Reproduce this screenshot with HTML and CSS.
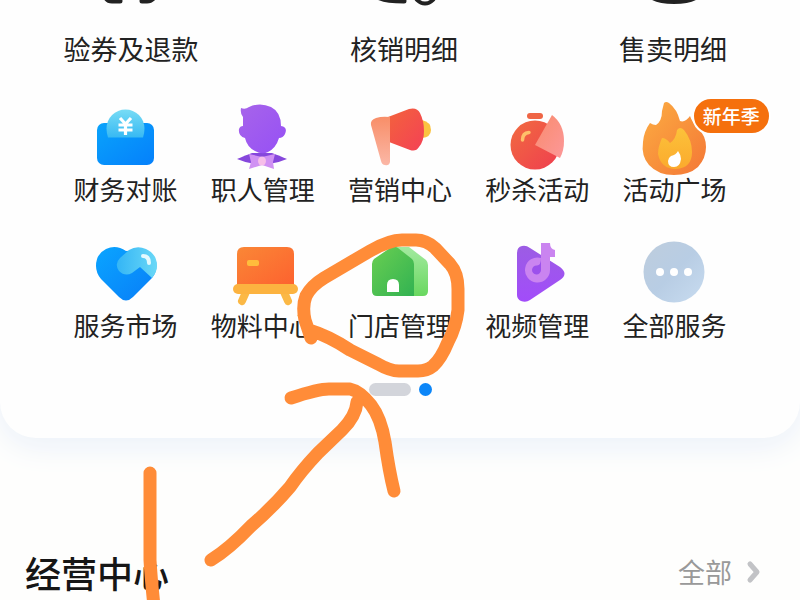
FILE: index.html
```html
<!DOCTYPE html>
<html lang="zh-CN">
<head>
<meta charset="utf-8">
<meta name="viewport" content="width=device-width, initial-scale=1">
<title>经营中心</title>
<link rel="stylesheet" href="styles.css">
</head>
<body>
<main class="page">
  <section class="card">
    <nav class="primary">
      <a class="primary-item" href="#">
        <svg class="primary-icon" viewBox="91 0 80 35" aria-hidden="true"><g fill="none" stroke="#222" stroke-width="5" stroke-linecap="round"><path d="M105-4Q107 1 112 1H120"/><path d="M142 1H147Q152 1 156-5"/></g></svg>
        <span>验券及退款</span>
      </a>
      <a class="primary-item" href="#">
        <svg class="primary-icon" viewBox="364 0 80 35" aria-hidden="true"><g fill="none" stroke="#222" stroke-linecap="round"><path d="M380-2Q387 1 404 1" stroke-width="5"/><circle cx="425" cy="-7" r="10.500" stroke-width="4"/></g></svg>
        <span>核销明细</span>
      </a>
      <a class="primary-item" href="#">
        <svg class="primary-icon" viewBox="633 0 80 35" aria-hidden="true"><path d="M648-3Q655 4 674 4T700-3Z" fill="#222"/></svg>
        <span>售卖明细</span>
      </a>
    </nav>

    <nav class="services">
      <a class="service" href="#">
        <svg class="service-icon" viewBox="86 102 80 72" aria-hidden="true">
          <defs>
            <linearGradient id="wallet" x1="0" y1="0" x2="1" y2="1"><stop offset="0" stop-color="#09a3fb"/><stop offset="1" stop-color="#0580fb"/></linearGradient>
            <linearGradient id="coin" x1="0" y1="0" x2="0" y2="1"><stop offset="0" stop-color="#78dcf5"/><stop offset="1" stop-color="#37b9f3"/></linearGradient>
          </defs>
          <rect x="97" y="123" width="57" height="42" rx="7" fill="url(#wallet)"/>
          <path d="M108 137.500Q106.500 133 106.500 128.500A19 19 0 0 1 144.500 128.500Q144.500 133 143 137.500Z" fill="url(#coin)"/>
          <path d="M120 118L125.500 124L131 118M118.500 125H132.500M118.500 130H132.500M125.500 124V135" fill="none" stroke="#fff" stroke-width="3.200"/>
        </svg>
        <span>财务对账</span>
      </a>
      <a class="service" href="#">
        <svg class="service-icon" viewBox="223 102 80 72" aria-hidden="true">
          <defs><linearGradient id="person" x1="0" y1="0" x2="1" y2="1"><stop offset="0" stop-color="#a764ea"/><stop offset="1" stop-color="#9650f5"/></linearGradient></defs>
          <path d="M237 159Q246 155 252 153H272Q278 155 287 159Q278 163 269 164H255Q246 163 237 159Z" fill="#8647dc"/>
          <path d="M241 108Q245 110 249 107Q260 102 271 107Q281 112 281 126Q288 127 285 134Q283 138 279 138Q276 148 268 152Q262 155 255 151Q247 147 245 138Q238 136 239 129Q240 126 243 126V117Q240 114 241 108Z" fill="url(#person)"/>
          <path d="M249 154L262 157L275 154L273 162L274 169L262 165L249 169L251 162Z" fill="#d091f3"/><ellipse cx="262" cy="161" rx="4" ry="4.500" fill="#f6bee9"/>
        </svg>
        <span>职人管理</span>
      </a>
      <a class="service" href="#">
        <svg class="service-icon" viewBox="360 102 80 72" aria-hidden="true">
          <defs>
            <linearGradient id="horn" x1="0" y1="0" x2="1" y2="1"><stop offset="0" stop-color="#f3633c"/><stop offset="1" stop-color="#f44155"/></linearGradient>
            <linearGradient id="handle" x1="0" y1="0" x2="0" y2="1"><stop offset="0" stop-color="#f88e68"/><stop offset="1" stop-color="#fbb7a6"/></linearGradient>
          </defs>
          <path d="M422 120Q431 122 431 130Q431 137 422 138Z" fill="#fbc340"/>
          <path d="M388 117L409 109Q417 107 420 113Q424 121 424 131Q424 141 419 147Q416 152 410 150L389 142Z" fill="url(#horn)"/>
          <path d="M376 118Q382 116 390 117V162Q389 166 385 165Q382 165 381 161L371 125Q370 120 376 118Z" fill="url(#handle)"/>
        </svg>
        <span>营销中心</span>
      </a>
      <a class="service" href="#">
        <svg class="service-icon" viewBox="497 102 80 72" aria-hidden="true">
          <defs>
            <linearGradient id="watch" x1="0" y1="0" x2="1" y2="1"><stop offset="0" stop-color="#f16b40"/><stop offset="1" stop-color="#ef3e4f"/></linearGradient>
            <linearGradient id="slice" x1="0" y1="0" x2="1" y2="1"><stop offset="0" stop-color="#f98b6c"/><stop offset="1" stop-color="#fc9899"/></linearGradient>
          </defs>
          <rect x="527" y="113" width="16" height="6" rx="3" fill="#ef6545"/>
          <circle cx="535" cy="145" r="24.500" fill="url(#watch)"/>
          <path d="M535 145L552 115Q564 124 564 141Q564 151 560 158Z" fill="url(#slice)"/>
          <path d="M522.500 140Q522.500 133 529 132.500" fill="none" stroke="#ffc06a" stroke-width="3.500" stroke-linecap="round"/>
        </svg>
        <span>秒杀活动</span>
      </a>
      <a class="service" href="#">
        <svg class="service-icon" viewBox="634 102 80 72" aria-hidden="true">
          <defs>
            <linearGradient id="flame" x1="0" y1="0" x2="1" y2="1"><stop offset="0" stop-color="#fcad42"/><stop offset="1" stop-color="#f47736"/></linearGradient>
            <linearGradient id="core" x1="0" y1="0" x2="0" y2="1"><stop offset="0" stop-color="#fcc23a"/><stop offset="1" stop-color="#fbaa2d"/></linearGradient>
          </defs>
          <path d="M664 103Q666 101 669 103Q677 109 680 121Q685 123 690 116Q692 122 698 128Q706 136 706 147Q706 158 698 167Q689 175 674 175Q658 175 649 165Q641 156 643 142Q644 131 650 123Q653 125 656 125Q662 121 662 111Z" fill="url(#flame)"/>
          <path d="M677 130Q680 126 684 130Q692 140 692 152Q692 168 676 169Q661 169 658 154Q658 147 662 138Q666 138 670 143Q676 139 677 130Z" fill="url(#core)"/>
          <path d="M678 151Q681 155 681 159Q680 167 674 167Q668 167 668 161Q668 158 671 156Q676 155 678 151Z" fill="#fff"/>
        </svg>
        <span>活动广场</span>
        <strong class="badge">新年季</strong>
      </a>

      <a class="service" href="#">
        <svg class="service-icon" viewBox="86 238 80 72" aria-hidden="true">
          <defs>
            <linearGradient id="heart" x1="0" y1="0" x2="1" y2="1"><stop offset="0" stop-color="#0aa5ff"/><stop offset="1" stop-color="#087df8"/></linearGradient>
            <linearGradient id="hand" x1="0" y1="0" x2="1" y2="0"><stop offset="0" stop-color="#34b5f5"/><stop offset="1" stop-color="#6ad8f7"/></linearGradient>
          </defs>
          <path d="M126 251Q116 244 106 249Q96 254 96 266Q96 273 101 279L119 297Q126 304 133 297L152 278Q158 271 156 261L145 250Z" fill="url(#heart)"/>
          <path d="M129 250Q137 245 146 249Q157 254 157 266Q157 272 152 278L140 267L132 273Q125 277 119 271Q114 264 120 258Z" fill="url(#hand)"/>
          <path d="M143 256Q149 256 149 263" fill="none" stroke="#e4faff" stroke-width="4" stroke-linecap="round"/>
        </svg>
        <span>服务市场</span>
      </a>
      <a class="service" href="#">
        <svg class="service-icon" viewBox="223 238 80 72" aria-hidden="true">
          <defs><linearGradient id="board" x1="0" y1="0" x2="1" y2="1"><stop offset="0" stop-color="#fa8736"/><stop offset="1" stop-color="#fd612f"/></linearGradient></defs>
          <path d="M246 292L242 301M284 292L288 301" stroke="#fbb845" stroke-width="8" stroke-linecap="round"/>
          <path d="M237 287V254Q237 247 244 247H287Q294 247 294 254V287Z" fill="url(#board)"/>
          <rect x="233" y="284" width="65" height="10" rx="5" fill="#fcb340"/>
          <rect x="247" y="260" width="12" height="6" rx="2" fill="#ffbd3c"/>
        </svg>
        <span>物料中心</span>
      </a>
      <a class="service" href="#">
        <svg class="service-icon" viewBox="360 238 80 72" aria-hidden="true">
          <defs>
            <linearGradient id="house" x1="0" y1="0" x2="1" y2="1"><stop offset="0" stop-color="#6acf51"/><stop offset="1" stop-color="#32b252"/></linearGradient>
            <linearGradient id="side" x1="0" y1="0" x2="0" y2="1"><stop offset="0" stop-color="#a3eaa0"/><stop offset="1" stop-color="#69d75f"/></linearGradient>
          </defs>
          <path d="M394 247H409L426 260Q428 262 428 265V291Q428 296 423 296H394Z" fill="url(#side)"/>
          <path d="M372 264Q372 261 374 259L390 248Q394 245 398 248L412 259Q414 261 414 264V296H377Q372 296 372 291Z" fill="url(#house)"/>
          <path d="M387 292V285Q387 279 393 279T399 285V292Z" fill="#fff"/>
        </svg>
        <span>门店管理</span>
      </a>
      <a class="service" href="#">
        <svg class="service-icon" viewBox="497 238 80 72" aria-hidden="true">
          <defs><linearGradient id="play" x1="0" y1="0" x2="0" y2="1"><stop offset="0" stop-color="#9c5de4"/><stop offset="1" stop-color="#a24cfa"/></linearGradient></defs>
          <path d="M517 253Q517 247 522 246Q526 245 530 248L560 267Q569 274 560 280L530 300Q526 303 521 301Q517 299 517 295Z" fill="url(#play)"/>
          <path d="M541 243H550Q550 249 555 250V257H550V270A12.500 12.500 0 1 1 541 258Z" fill="#ca84f0"/>
          <path d="M541 258V270A4.500 4.500 0 1 1 537 265.500Q541 265.500 541 258Z" fill="#9c50ec"/>
        </svg>
        <span>视频管理</span>
      </a>
      <a class="service" href="#">
        <svg class="service-icon" viewBox="634 238 80 72" aria-hidden="true">
          <defs><linearGradient id="more" x1="0" y1="0" x2="1" y2="1"><stop offset="0" stop-color="#becddd"/><stop offset=".5" stop-color="#b8cde4"/><stop offset="1" stop-color="#c8dcf0"/></linearGradient></defs>
          <circle cx="674" cy="272" r="30.500" fill="url(#more)"/><g fill="#fff"><circle cx="660" cy="272" r="4"/><circle cx="674" cy="272" r="4"/><circle cx="688" cy="272" r="4"/></g>
        </svg>
        <span>全部服务</span>
      </a>
    </nav>

    <div class="pager"><i class="pager-bar"></i><i class="pager-dot"></i></div>
  </section>

  <header class="section-head">
    <h2>经营中心</h2>
    <a class="all" href="#">全部<svg class="chevron" viewBox="0 0 16 24" aria-hidden="true"><path d="M4 4L11 12L4 20" fill="none" stroke="#c2c3c6" stroke-width="5" stroke-linecap="round" stroke-linejoin="round"/></svg></a>
  </header>

  <svg class="ink" viewBox="0 0 800 600" aria-hidden="true">
    <g fill="none" stroke="#ff8c38" stroke-width="13" stroke-linecap="round" stroke-linejoin="round">
      <path d="M311 338L305 320Q302 306 306 296Q311 286 324 278L370 251Q389 240 402 240H416Q426 240 435 248L450 264Q458 273 458 289V310Q456 327 448 342Q441 359 433 366Q427 371 418 371H399Q390 371 378 364L350 350Q329 336 309 330"/>
      <path d="M291 398Q318 389 329 389H350Q360 391 371 405Q381 418 385 442Q389 471 394 491"/>
      <path d="M357 402Q356 416 342 430L318 453Q301 471 290 487Q273 507 251 526Q229 549 211 560"/>
      <path d="M150 473V560Q151 578 154 606"/>
    </g>
  </svg>
</main>
</body>
</html>
```
FILE: styles.css
```css
* {
  box-sizing: border-box;
}

body {
  margin: 0;
  background: #fefefd;
  color: #222;
  font-family: "Noto Sans CJK SC", sans-serif;
}

a {
  color: inherit;
  text-decoration: none;
}

.page {
  position: relative;
  min-height: 100vh;
  overflow: hidden;
}

.card {
  padding-bottom: 42px;
  border-radius: 0 0 36px 36px;
  background: #fefefe;
  box-shadow: 0 8px 32px #eaf0f9;
}

.primary {
  display: grid;
  grid-template-columns: 262fr 284fr 254fr;
  margin-bottom: 37px;
}

.primary-item {
  display: flex;
  flex-direction: column;
  align-items: center;
  font-size: 27px;
  line-height: 32px;
}

.primary-icon {
  width: 80px;
  height: 35px;
  margin-bottom: -2px;
}

.services {
  display: grid;
  grid-template-columns: repeat(5, 1fr);
  row-gap: 33px;
  padding: 0 57px;
}

.service {
  position: relative;
  display: flex;
  flex-direction: column;
  align-items: center;
  font-size: 26px;
  line-height: 32px;
  white-space: nowrap;
}

.service-icon {
  width: 80px;
  height: 72px;
  margin-bottom: -1px;
  overflow: visible;
}

.badge {
  position: absolute;
  top: -5px;
  left: 86px;
  padding: 0 9px;
  border: 2px solid #fff;
  border-radius: 20px;
  background: #f5700d;
  color: #fff;
  font-size: 19px;
  font-weight: 500;
  line-height: 34px;
}

.pager {
  display: flex;
  justify-content: center;
  gap: 8px;
  margin-top: 42px;
}

.pager-bar,
.pager-dot {
  width: 13px;
  height: 13px;
  border-radius: 7px;
  background: #0c86f8;
}

.pager-bar {
  width: 42px;
  background: #d3d5db;
}

.section-head {
  display: flex;
  align-items: center;
  justify-content: space-between;
  padding: 108px 38px 0 25px;
}

.section-head h2 {
  margin: 0;
  color: #161616;
  font-size: 36px;
  font-weight: 500;
  line-height: 52px;
}

.all {
  display: flex;
  align-items: center;
  gap: 14px;
  color: #999;
  font-size: 27px;
  line-height: 36px;
}

.chevron {
  width: 16px;
  height: 24px;
}

.ink {
  position: absolute;
  top: 0;
  left: 0;
  width: 800px;
  height: 600px;
  pointer-events: none;
}
```
